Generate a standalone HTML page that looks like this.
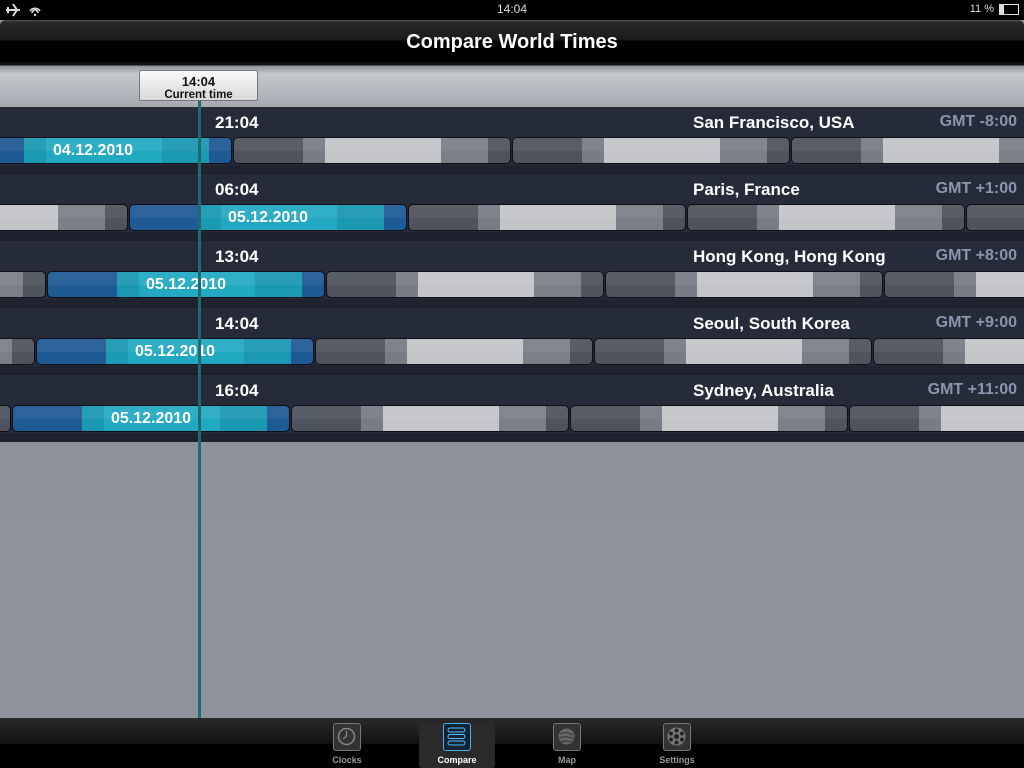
<!DOCTYPE html>
<html><head><meta charset="utf-8"><style>
*{margin:0;padding:0;box-sizing:border-box}
body{width:1024px;height:768px;overflow:hidden;position:relative;background:linear-gradient(#8a8e99,#8f939d);font-family:"Liberation Sans",sans-serif}
.status{position:absolute;left:0;top:0;width:1024px;height:20px;background:#000;color:#ddd;font-size:12px}
.title{position:absolute;left:0;top:20px;width:1024px;height:42px;background:linear-gradient(#555 0,#2a2a2a 2px,#1a1a1a 20px,#000 21px,#000);border-radius:6px 6px 0 0;color:#fff;font-weight:bold;font-size:20px;text-align:center;line-height:44px}
.strip{position:absolute;left:0;top:62px;width:1024px;height:45px;background:linear-gradient(#111 0,#111 3px,#8f939a 4px,#c6c9cd 12px,#b4b7bc 30px,#a5a8ae 45px)}
.badge{position:absolute;left:139px;top:70px;width:119px;height:31px;background:linear-gradient(#fafafa,#d8d8d8);border:1px solid #777;border-radius:2px;text-align:center;color:#111;font-weight:bold;font-size:13px;line-height:12px;padding-top:5px}
.badge span{font-size:11.5px}
.row{position:absolute;left:0;width:1024px;height:67px;background:#262b3a;overflow:hidden;border-bottom:2px solid #1c202b}
.row .bot{position:absolute;left:0;top:58px;width:1024px;height:9px;background:#1f2330}
.t{position:absolute;left:215px;top:6px;color:#fff;font-weight:bold;font-size:17px}
.c{position:absolute;left:693px;top:6px;color:#fff;font-weight:bold;font-size:17px}
.g{position:absolute;right:7px;top:6px;color:#8b95ad;font-weight:bold;font-size:16px}
.d{position:absolute;top:30px;height:27px;border:1px solid #0c0f16;border-radius:5px;overflow:hidden}
.gr{background:linear-gradient(90deg,#4e535d 0,#4e535d 25%,#777c86 25%,#777c86 33%,#c3c5c9 33%,#c3c5c9 75%,#7a7f88 75%,#7a7f88 92%,#4e535d 92%)}
.bl{background:linear-gradient(90deg,#1e5a94 0,#1e5a94 25%,#1b98b2 25%,#1b98b2 33%,#22a9c2 33%,#22a9c2 75%,#1b98b2 75%,#1b98b2 92%,#1e5a94 92%);color:#fff;font-weight:bold;font-size:16px;text-align:center;line-height:25px}
.d::after{content:"";position:absolute;left:0;top:0;right:0;height:50%;background:rgba(255,255,255,.06)}
.line{position:absolute;left:198px;top:100px;width:3px;height:618px;background:#1d6a72}
.tab{position:absolute;left:0;top:718px;width:1024px;height:50px;background:linear-gradient(#2a2a2a,#111 26px,#000 26px)}
.ti{position:absolute;top:5px;width:28px;height:28px;border:1.5px solid #777;border-radius:3px;background:#333}
.tl{position:absolute;top:37px;font-size:9px;font-weight:bold;color:#999;width:80px;text-align:center}
</style></head><body>
<div class="status">
<svg style="position:absolute;left:4px;top:2px" width="40" height="16"><path d="M2 8h14M9 2l4 6-4 6M4 5v6" stroke="#ddd" stroke-width="2" fill="none"/><path d="M26 9a6 6 0 0 1 10 0M28 11a3 3 0 0 1 6 0" stroke="#ddd" stroke-width="1.6" fill="none"/><circle cx="31" cy="13" r="1.2" fill="#ddd"/></svg>
<div style="position:absolute;left:0;width:1024px;text-align:center;top:2px">14:04</div>
<div style="position:absolute;right:30px;top:3px;font-size:11px">11 %</div>
<div style="position:absolute;right:5px;top:4px;width:20px;height:11px;border:1px solid #ddd;background:#000"><div style="width:4px;height:9px;background:#ddd"></div></div>
</div>
<div class="title">Compare World Times</div>
<div class="strip"></div>
<div id="rows"></div>
<div class="line"></div>
<div class="badge">14:04<br><span>Current time</span></div>
<div class="tab">
<div style="position:absolute;left:419px;top:4px;width:76px;height:46px;background:#2a2a2a;border-radius:3px"></div>
<div class="ti" style="left:333px"><svg width="25" height="25"><circle cx="12.5" cy="12.5" r="8" stroke="#888" stroke-width="1.5" fill="none"/><path d="M12.5 12.5V7M12.5 12.5L9 15" stroke="#888" stroke-width="1.3"/></svg></div>
<div class="tl" style="left:307px">Clocks</div>
<div class="ti" style="left:443px;border-color:#4ab0ef;background:#123"><svg width="25" height="25"><rect x="4" y="4" width="17" height="4" rx="2" stroke="#5bc0ff" fill="none"/><rect x="4" y="10.5" width="17" height="4" rx="2" stroke="#5bc0ff" fill="none"/><rect x="4" y="17" width="17" height="4" rx="2" stroke="#5bc0ff" fill="none"/></svg></div>
<div class="tl" style="left:417px;color:#fff">Compare</div>
<div class="ti" style="left:553px"><svg width="25" height="25"><circle cx="12.5" cy="12.5" r="8" fill="#666"/><path d="M6 10q6-3 13 1M5 14q7-3 15 1M7 18q5-2 11 0" stroke="#333" fill="none"/></svg></div>
<div class="tl" style="left:527px">Map</div>
<div class="ti" style="left:663px"><svg width="25" height="25"><circle cx="12.5" cy="12.5" r="9" fill="#777"/><circle cx="12.5" cy="12.5" r="2.5" fill="#222"/><circle cx="12.5" cy="6.5" r="2" fill="#222"/><circle cx="12.5" cy="18.5" r="2" fill="#222"/><circle cx="7" cy="9.5" r="2" fill="#222"/><circle cx="18" cy="9.5" r="2" fill="#222"/><circle cx="7" cy="15.5" r="2" fill="#222"/><circle cx="18" cy="15.5" r="2" fill="#222"/></svg></div>
<div class="tl" style="left:637px">Settings</div>
</div>
<script>
var R=[["21:04","San Francisco, USA","GMT -8:00",-46,"04.12.2010"],["06:04","Paris, France","GMT +1:00",129,"05.12.2010"],["13:04","Hong Kong, Hong Kong","GMT +8:00",47,"05.12.2010"],["14:04","Seoul, South Korea","GMT +9:00",36,"05.12.2010"],["16:04","Sydney, Australia","GMT +11:00",12,"05.12.2010"]];
var h="";
R.forEach(function(r,i){
h+='<div class="row" style="top:'+(107+i*67)+'px"><div class="bot"></div>';
for(var k=-3;k<5;k++){var x=r[3]+k*279;if(x>1024||x+279<0)continue;
h+='<div class="d '+(k==0?'bl':'gr')+'" style="left:'+x+'px;width:278px">'+(k==0?r[4]:'')+'</div>';}
h+='<div class="t">'+r[0]+'</div><div class="c">'+r[1]+'</div><div class="g">'+r[2]+'</div></div>';
});
document.getElementById("rows").innerHTML=h;
</script>
</body></html>
